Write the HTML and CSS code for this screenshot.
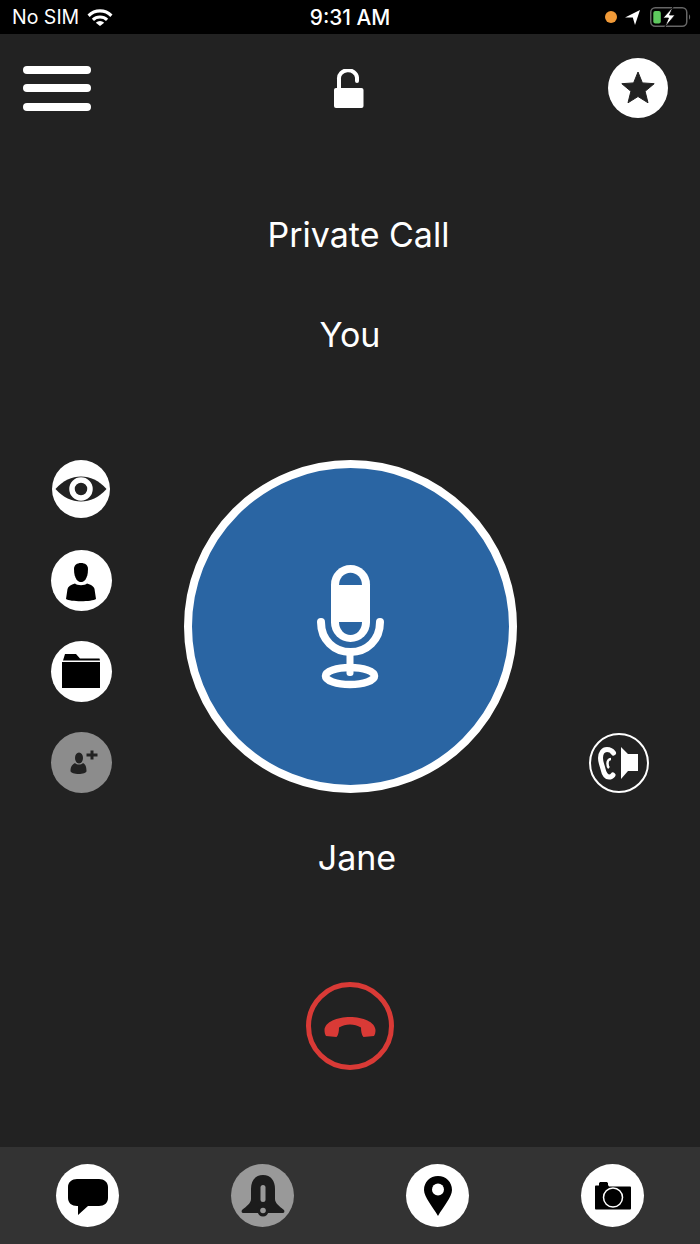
FILE: index.html
```html
<!DOCTYPE html>
<html lang="en">

<head>
    <meta charset="UTF-8">
    <title>Private Call</title>
    <link rel="stylesheet" href="styles.css">
</head>

<body>
    <div class="phone">
        <div class="status">
            <div class="status-left">
                <span>No SIM</span>
                <svg class="wifi" width="26" height="18" viewBox="0 0 26 18">
                    <path d="M.5 6.500a17.500 17.500 0 0 1 25 0l-2.200 2.400a14.300 14.300 0 0 0-20.600 0z" fill="#fff"/>
                    <path d="M4.800 10.700a11.800 11.800 0 0 1 16.400 0l-2.200 2.300a8.500 8.500 0 0 0-12 0z" fill="#fff"/>
                    <path d="M8.800 14.800a6 6 0 0 1 8.400 0L13 18z" fill="#fff"/>
                </svg>
            </div>
            <div class="status-time">9:31 AM</div>
            <div class="status-right">
                <span class="dot"></span>
                <svg class="arrow" width="15" height="15" viewBox="0 0 15 15"><path d="M0 7.500 15 0 10 15 7.800 7.500z" fill="#fff"/></svg>
                <svg width="42" height="20" viewBox="0 0 42 20">
                    <rect x=".75" y=".75" width="36" height="18.500" rx="4.500" fill="none" stroke="#666" stroke-width="1.500"/>
                    <path d="M39 7.500c1.500.5 1.500 4.500 0 5z" fill="#666"/>
                    <rect x="3.300" y="4" width="7.500" height="12.500" rx="2" fill="#5ec85e"/>
                    <path d="M23 0 13 11h5.500L15 20 25 8h-5.500z" fill="#fff" stroke="#000" stroke-width=".8"/>
                </svg>
            </div>
        </div>

        <div class="main">
            <div class="topbar">
                <div class="menu"><i></i><i></i><i></i></div>
                <svg class="lock" width="30" height="40" viewBox="0 0 30 40">
                    <path d="M5 19V10a9 8 0 0 1 18-1.500V12" fill="none" stroke="#fff" stroke-width="4" stroke-linecap="round"/>
                    <rect x="0" y="19" width="29.500" height="20" rx="2" fill="#fff"/>
                </svg>
                <div class="btn btn-star">
                    <svg width="34" height="32" viewBox="0 0 34 32"><path d="M17 0l4.400 10.900 11.800.8-9.100 7.600 2.900 11.500L17 24.500 7 30.800l2.900-11.500L.8 11.700l11.800-.8z" fill="#222" stroke="#222" stroke-width="1" stroke-linejoin="round"/></svg>
                </div>
            </div>

            <div class="title">Private Call</div>
            <div class="you">You</div>

            <div class="stage">
                <div class="side">
                    <div class="btn btn-eye">
                        <svg width="52" height="26" viewBox="0 0 52 26">
                            <path d="M.5 13C8 4.500 17 .5 26 .5S44 4.500 51.500 13C44 21.500 35 25.500 26 25.500S8 21.500 .5 13z" fill="#222"/>
                            <circle cx="26" cy="13" r="9" fill="#222" stroke="#fff" stroke-width="5.500"/>
                        </svg>
                    </div>
                    <div class="btn btn-side">
                        <svg class="icon-person" width="30" height="39" viewBox="0 0 30 39">
                            <path d="M8 6C8 2 11 0 15 0s7 2 7 6c0 5-1 8-2.500 10.500C18 18.500 16.500 19 15 19s-3-.5-4.500-2.500C9 14 8 11 8 6z" fill="#000"/>
                            <path d="M9 20.500c2 2.300 10 2.300 12 0 4 1 7 3 7.500 5.500L30 36c-4 3-26 3-30 0l1.500-10C2 23.500 5 21.500 9 20.500z" fill="#000"/>
                        </svg>
                    </div>
                    <div class="btn btn-side">
                        <svg class="icon-folder" width="38" height="34" viewBox="0 0 38 34">
                            <path d="M1 6.500 3 0h11l4 4.500h19.500l.5 2z" fill="#000"/>
                            <rect x="0" y="8" width="38" height="26" fill="#000"/>
                        </svg>
                    </div>
                    <div class="btn btn-side btn-off">
                        <svg width="34" height="26" viewBox="0 0 34 26">
                            <ellipse cx="15" cy="8" rx="4" ry="5.500" fill="#222"/>
                            <path d="M11 13c2 2 6 2 8 0 2 1 3.500 3 3.500 8 0 4-15.500 4-16 0C6.500 16 9 14 11 13z" fill="#222"/>
                            <path d="M28 .5v9M22.500 5h11" stroke="#222" stroke-width="3" fill="none"/>
                        </svg>
                    </div>
                </div>

                <div class="talk">
                    <svg class="mic" width="80" height="140" viewBox="0 0 80 140">
                        <rect x="21" y="5" width="39" height="77" rx="19.500" fill="#fff"/>
                        <path d="M29 25a11.500 12.300 0 0 1 23 0z" fill="#2a65a3"/>
                        <path d="M29 62h23a11.500 13 0 0 1-23 0z" fill="#2a65a3"/>
                        <path d="M11 62C11 80 24 92 40.500 92S70 80 70 62" fill="none" stroke="#fff" stroke-width="8" stroke-linecap="round"/>
                        <rect x="36.500" y="92" width="7" height="24" rx="3" fill="#fff"/>
                        <ellipse cx="40" cy="116" rx="24.500" ry="8.500" fill="none" stroke="#fff" stroke-width="7.500"/>
                    </svg>
                </div>

                <div class="side-right">
                    <div class="btn-ear">
                        <svg width="42" height="34" viewBox="0 0 42 34">
                            <path d="M15.500 7C13.500 4 11 3.500 9 3.500 5 3.500 2.500 7 2.500 12 2.500 16 4 19 5 23 6 28 8.500 31 11 31c1.500 0 3-.5 4-2" fill="none" stroke="#fff" stroke-width="5" stroke-linecap="round"/>
                            <path d="M13 13c-2.500 0-3.500 2.500-3.500 4.500 0 2 .5 3.500 1.500 4.500" fill="none" stroke="#fff" stroke-width="2.500"/>
                            <path d="M23 1l7 7h10v17H30l-7 8z" fill="#fff"/>
                        </svg>
                    </div>
                </div>
            </div>

            <div class="name">Jane</div>

            <div class="hangup">
                <svg class="handset" width="52" height="20" viewBox="0 0 52 20">
                    <path d="M.5 13C1 5 13 0 26 0s25 5 25.500 13c0 2.500-.5 4.500-1.500 6l-10.500 1c-2-2-2.500-6-2.500-9.500C33.500 8.500 30 7.500 26 7.500s-7.500 1-11 3c0 3.500-.5 7.500-2.500 9.500L2 19c-1-1.500-1.500-3.500-1.500-6z" fill="#d93a36"/>
                </svg>
            </div>
        </div>

        <div class="tabbar">
            <div class="tab">
                <svg class="icon-bubble" width="40" height="37" viewBox="0 0 40 37">
                    <path d="M9 0h22c5 0 9 3 9 8v11c0 5-4 8-9 8H20L10 36V27H9c-5 0-9-3-9-8V8c0-5 4-8 9-8z" fill="#000"/>
                </svg>
            </div>
            <div class="tab tab-off">
                <svg width="44" height="44" viewBox="0 0 44 44">
                    <path d="M22 1c8 0 12 6 12 14v10c0 4 4 7 9 11 1 2 0 3-2 3H3c-2 0-3-1-2-3 5-4 9-7 9-11V15C10 7 14 1 22 1z" fill="#1c1c1c"/>
                    <rect x="19.500" y="11" width="5" height="17" rx="2.500" fill="#999"/>
                    <circle cx="22" cy="37" r="5.500" fill="#1c1c1c"/>
                    <circle cx="22" cy="36.500" r="2.800" fill="#999"/>
                </svg>
            </div>
            <div class="tab">
                <svg width="28" height="40" viewBox="0 0 28 40">
                    <path d="M14 0C6 0 0 6 0 14c0 7 9 17 14 26 5-9 14-19 14-26C28 6 22 0 14 0z" fill="#000"/>
                    <circle cx="14" cy="13.500" r="6" fill="#fff"/>
                </svg>
            </div>
            <div class="tab">
                <svg width="36" height="28" viewBox="0 0 36 28">
                    <path d="M1 3.500h3V1.500C4 .5 5 0 6 0h5c1 0 2 .5 2 1.500v1.500l1 1.500h21c.5 0 1 .5 1 1V26.500c0 .5-.5 1-1 1H1c-.5 0-1-.5-1-1V4.500c0-.5.5-1 1-1z" fill="#000"/>
                    <circle cx="18" cy="15.500" r="9.500" fill="none" stroke="#fff" stroke-width="1.500"/>
                </svg>
            </div>
        </div>
    </div>
</body>

</html>
```

FILE: styles.css
```css
* {
    margin: 0;
    padding: 0;
    box-sizing: border-box;
}

html,
body {
    width: 700px;
    height: 1244px;
    overflow: hidden;
}

body {
    font-family: Inter, "Liberation Sans", sans-serif;
    color: #fff;
    background-color: #222;
}

.phone {
    width: 700px;
    height: 1244px;
    display: flex;
    flex-direction: column;
}

.status {
    height: 34px;
    flex: none;
    display: grid;
    grid-template-columns: 1fr auto 1fr;
    align-items: center;
    padding: 0 8px 0 12px;
    background-color: #000;
    font-size: 19.500px;
}

.status-left {
    display: flex;
    align-items: center;
    gap: 8px;
}

.status-time {
    margin-right: 4px;
    font-size: 20.800px;
    font-weight: 500;
}

.status-right {
    display: flex;
    align-items: center;
    justify-content: flex-end;
    gap: 8px;
}

.dot {
    width: 12px;
    height: 12px;
    border-radius: 50%;
    background-color: #f19a38;
}

.arrow {
    margin-right: 2px;
}

.main {
    flex: 1;
    display: flex;
    flex-direction: column;
    background-color: #222;
}

.topbar {
    display: flex;
    align-items: center;
    justify-content: space-between;
    margin-top: 24px;
    padding: 0 32px 0 23px;
}

.menu {
    width: 68px;
    display: flex;
    flex-direction: column;
    gap: 10.500px;
}

.menu i {
    display: block;
    height: 8px;
    border-radius: 4px;
    background-color: #fff;
}

.lock {
    margin: 2px 1px 0 0;
}

.btn {
    display: flex;
    align-items: center;
    justify-content: center;
    border-radius: 50%;
    background-color: #fff;
    flex: none;
}

.btn-star {
    width: 60px;
    height: 60px;
}

.title,
.you,
.name {
    height: 44px;
    line-height: 44px;
    text-align: center;
    font-size: 34px;
}

.title {
    margin-top: 95px;
    padding-left: 17px;
}

.you {
    margin-top: 56px;
}

.stage {
    height: 333px;
    margin-top: 103px;
    display: grid;
    grid-template-columns: 184px 333px 1fr;
}

.side {
    width: 162px;
    display: flex;
    flex-direction: column;
    align-items: center;
    gap: 30px;
}

.btn-eye {
    width: 58px;
    height: 58px;
    margin-bottom: 2px;
}

.btn-side {
    width: 61px;
    height: 61px;
}

.btn-off {
    background-color: #8c8c8c;
}

.icon-person {
    margin-top: 3px;
}

.icon-folder {
    margin-bottom: 2px;
}

.talk {
    width: 333px;
    height: 333px;
    display: flex;
    align-items: center;
    justify-content: center;
    border: 8px solid #fff;
    border-radius: 50%;
    background-color: #2a65a3;
}

.mic {
    margin: 6px 2px 0 0;
}

.side-right {
    padding: 273px 0 0 72px;
}

.btn-ear {
    width: 60px;
    height: 60px;
    display: flex;
    align-items: center;
    justify-content: center;
    border: 2px solid #fff;
    border-radius: 50%;
}

.name {
    margin-top: 43px;
    padding-left: 14px;
}

.hangup {
    width: 88px;
    height: 88px;
    margin: 102px auto 0;
    display: flex;
    align-items: center;
    justify-content: center;
    border: 5px solid #d93a36;
    border-radius: 50%;
}

.handset {
    margin-top: 2px;
}

.tabbar {
    height: 97px;
    flex: none;
    display: flex;
    gap: 112px;
    padding: 17px 0 0 56px;
    background-color: #333;
}

.tab {
    width: 63px;
    height: 63px;
    display: flex;
    align-items: center;
    justify-content: center;
    border-radius: 50%;
    background-color: #fff;
}

.tab-off {
    background-color: #999;
}

.icon-bubble {
    margin-top: 3px;
}
```
